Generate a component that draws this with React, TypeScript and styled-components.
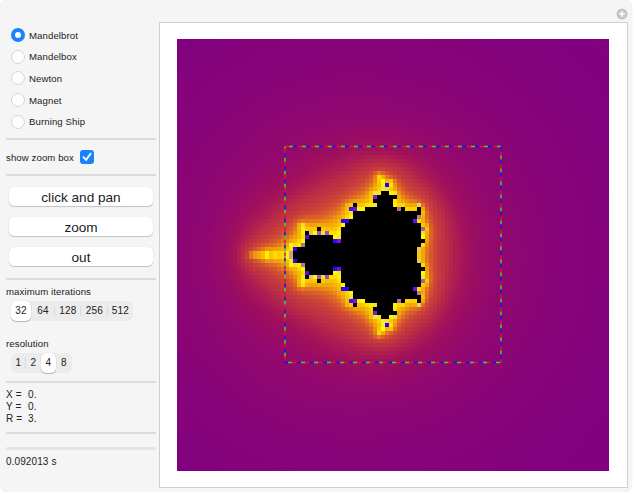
import React, { useEffect, useRef, useState } from 'react'
import styled, { createGlobalStyle } from 'styled-components'

const GlobalStyle = createGlobalStyle`
  html, body {
    margin: 0;
    padding: 0;
    background: #ffffff;
    font-family: "Liberation Sans", Arial, sans-serif;
  }
`

const Panel = styled.div`
  position: relative;
  box-sizing: border-box;
  width: 632px;
  height: 492px;
  display: flex;
  align-items: flex-start;
  padding: 22px 4px 0 6px;
  background: #f5f5f5;
  border-radius: 8px;
  box-shadow: 0 0 1px #d8d8d8;
`

const Sidebar = styled.div`
  width: 150px;
  margin-right: 3px;
  display: flex;
  flex-direction: column;
  color: #222222;
  font-size: 9.6px;
  letter-spacing: 0.1px;
`

const RadioList = styled.div`
  box-sizing: border-box;
  display: flex;
  flex-direction: column;
  padding: 6px 0 0 5px;
  height: 116px;
  gap: 7.7px;
`

const RadioRow = styled.div`
  display: flex;
  align-items: center;
  gap: 4px;
  height: 14px;
`

const Radio = styled.span<{ $on?: boolean }>`
  box-sizing: border-box;
  width: 14px;
  height: 14px;
  border-radius: 50%;
  background: ${p => (p.$on ? '#ffffff' : '#fdfdfd')};
  border: ${p => (p.$on ? '4px solid #1a82fb' : '1px solid #d6d6d6')};
`

const Rule = styled.div<{ $top?: number }>`
  height: 2px;
  margin-top: ${p => p.$top ?? 0}px;
  background: #dcdcdc;
`

const CheckRow = styled.div`
  height: 34px;
  display: flex;
  align-items: center;
  gap: 6px;
`

const CheckBox = styled.span`
  width: 14px;
  height: 14px;
  border-radius: 3px;
  background: #1a82fb;
  display: flex;
  align-items: center;
  justify-content: center;
`

const ButtonStack = styled.div`
  height: 102px;
  display: flex;
  flex-direction: column;
  gap: 11px;
  padding: 11px 3px 0;
  box-sizing: border-box;
`

const PushButton = styled.div`
  height: 19px;
  border-radius: 5px;
  background: #ffffff;
  box-shadow: 0 1px 1px rgba(0, 0, 0, 0.2), 0 0 1px rgba(0, 0, 0, 0.15);
  font-size: 13.6px;
  letter-spacing: 0;
  line-height: 21px;
  text-align: center;
  color: #1c1c1c;
`

const ControlLabel = styled.div<{ $top: number }>`
  margin-top: ${p => p.$top}px;
  line-height: 12px;
  height: 12px;
`

const Segments = styled.div`
  align-self: flex-start;
  margin: 3px 0 0 5px;
  height: 20px;
  display: flex;
  align-items: center;
  background: #ececec;
  border-radius: 6px;
`

const Segment = styled.span<{ $on?: boolean; $sep?: boolean; $w: number }>`
  position: relative;
  width: ${p => p.$w}px;
  height: 20px;
  line-height: 20px;
  text-align: center;
  color: #222222;
  border-radius: 5px;
  letter-spacing: 0.2px;
  font-size: 10px;
  background: ${p => (p.$on ? '#ffffff' : 'transparent')};
  box-shadow: ${p => (p.$on ? '0 1px 1px rgba(0,0,0,0.25), 0 0 1px rgba(0,0,0,0.2)' : 'none')};

  &::after {
    content: '';
    display: ${p => (p.$sep ? 'block' : 'none')};
    position: absolute;
    right: 0;
    top: 5px;
    height: 10px;
    width: 1px;
    background: #dadada;
  }
`

const Readout = styled.div`
  height: 49px;
  padding-top: 6px;
  box-sizing: border-box;
  line-height: 12px;
  font-size: 10px;
`

const ReadLine = styled.div`
  display: flex;
`

const ReadName = styled.span`
  width: 22px;
`

const ProgressTrack = styled.div`
  height: 3px;
  margin-top: 13px;
  background: #e4e4e4;
  border-radius: 2px;
`

const Timing = styled.div`
  margin-top: 6px;
  line-height: 12px;
  font-size: 10px;
`

const Frame = styled.div`
  box-sizing: border-box;
  width: 469px;
  height: 466px;
  background: #ffffff;
  border: 1.5px solid #cfcfcf;
  padding: 16px 16px 0 16.5px;
`

const Plot = styled.div`
  position: relative;
  width: 432px;
  height: 432px;
`

const PlotCanvas = styled.canvas`
  display: block;
`

const ZoomBox = styled.svg`
  position: absolute;
  left: 106px;
  top: 106px;
`

const Pod = styled.svg`
  position: absolute;
  top: 8px;
  right: 4px;
`

const BLACK_FROM = 18.5

const stops: [number, number, number, number][] = [
  [0.9, 128, 0, 128],
  [2.1, 146, 8, 110],
  [2.7, 160, 16, 92],
  [3.5, 187, 44, 69],
  [4.5, 205, 70, 55],
  [5.5, 225, 110, 35],
  [6.5, 240, 160, 12],
  [8, 248, 190, 0],
  [10, 255, 225, 0],
  [12, 255, 255, 0],
  [15, 228, 210, 100],
  [16.2, 175, 105, 160],
  [17, 130, 30, 215],
  [17.8, 45, 0, 255],
  [32, 20, 0, 240],
]

function shade(mu: number): string {
  let i = 0
  while (i < stops.length - 2 && mu > stops[i + 1][0]) i++
  const a = stops[i]
  const b = stops[i + 1]
  const t = Math.max(0, Math.min(1, (mu - a[0]) / (b[0] - a[0])))
  const mix = (k: number) => Math.round(a[k] + (b[k] - a[k]) * t)
  return `rgb(${mix(1)},${mix(2)},${mix(3)})`
}

function escapeTime(cx: number, cy: number, maxIter: number): number {
  let x = 0
  let y = 0
  for (let n = 0; n < maxIter; n++) {
    const xx = x * x
    const yy = y * y
    if (xx + yy > 16) {
      return Math.max(0, n + 1 - Math.log2(Math.log2(xx + yy) / 2))
    }
    y = 2 * x * y + cy
    x = xx - yy + cx
  }
  return -1
}

const CELLS = 108
const CELL = 4

const Fractal = () => {
  const ref = useRef<HTMLCanvasElement>(null)
  useEffect(() => {
    const ctx = ref.current?.getContext('2d')
    if (!ctx) return
    for (let j = 0; j < CELLS; j++) {
      for (let i = 0; i < CELLS; i++) {
        const cx = -3 + ((i + 0.5) * 6) / CELLS
        const cy = -3 + ((j + 0.5) * 6) / CELLS
        const mu = escapeTime(cx, cy, 32)
        ctx.fillStyle = mu < 0 || mu >= BLACK_FROM ? '#000000' : shade(mu)
        ctx.fillRect(i * CELL, j * CELL, CELL, CELL)
      }
    }
  }, [])
  return <PlotCanvas ref={ref} width={432} height={432} />
}

const dashes = [
  { color: '#e01030', offset: 0 },
  { color: '#48d030', offset: -4 },
  { color: '#2010e8', offset: -8 },
]

const ZoomOutline = () => (
  <ZoomBox width="220" height="220" viewBox="0 0 220 220">
    {dashes.map(d => (
      <rect
        key={d.color}
        x="2"
        y="1.5"
        width="216"
        height="216"
        fill="none"
        stroke={d.color}
        strokeWidth="1.5"
        strokeDasharray="4 9"
        strokeDashoffset={d.offset}
      />
    ))}
  </ZoomBox>
)

const fractals = ['Mandelbrot', 'Mandelbox', 'Newton', 'Magnet', 'Burning Ship']
const iterations = [
  { label: '32', w: 20 },
  { label: '64', w: 24 },
  { label: '128', w: 26 },
  { label: '256', w: 27 },
  { label: '512', w: 25 },
]
const resolutions = [
  { label: '1', w: 15 },
  { label: '2', w: 15 },
  { label: '4', w: 15 },
  { label: '8', w: 16 },
]

export default function App() {
  const [kind] = useState('Mandelbrot')
  return (
    <>
      <GlobalStyle />
      <Panel>
        <Sidebar>
          <RadioList>
            {fractals.map(f => (
              <RadioRow key={f}>
                <Radio $on={f === kind} />
                {f}
              </RadioRow>
            ))}
          </RadioList>
          <Rule />
          <CheckRow>
            show zoom box
            <CheckBox>
              <svg width="10" height="10" viewBox="0 0 10 10">
                <path d="M1.5 5.2 L4 8 L8.6 1.6" fill="none" stroke="#ffffff" strokeWidth="1.8" strokeLinecap="round" strokeLinejoin="round" />
              </svg>
            </CheckBox>
          </CheckRow>
          <Rule />
          <ButtonStack>
            <PushButton>click and pan</PushButton>
            <PushButton>zoom</PushButton>
            <PushButton>out</PushButton>
          </ButtonStack>
          <Rule />
          <ControlLabel $top={6}>maximum iterations</ControlLabel>
          <Segments>
            {iterations.map((s, i) => (
              <Segment key={s.label} $w={s.w} $on={i === 0} $sep={i > 0 && i < iterations.length - 1}>
                {s.label}
              </Segment>
            ))}
          </Segments>
          <ControlLabel $top={17}>resolution</ControlLabel>
          <Segments>
            {resolutions.map((s, i) => (
              <Segment key={s.label} $w={s.w} $on={i === 2} $sep={i === 0}>
                {s.label}
              </Segment>
            ))}
          </Segments>
          <Rule $top={8} />
          <Readout>
            <ReadLine><ReadName>X =</ReadName>0.</ReadLine>
            <ReadLine><ReadName>Y =</ReadName>0.</ReadLine>
            <ReadLine><ReadName>R =</ReadName>3.</ReadLine>
          </Readout>
          <Rule />
          <ProgressTrack />
          <Timing>0.092013 s</Timing>
        </Sidebar>
        <Frame>
          <Plot>
            <Fractal />
            <ZoomOutline />
          </Plot>
        </Frame>
        <Pod width="12" height="12" viewBox="0 0 12 12">
          <circle cx="6" cy="6" r="5.5" fill="#c4c4c4" />
          <path d="M6 3 V9 M3 6 H9" stroke="#ffffff" strokeWidth="1.6" />
        </Pod>
      </Panel>
    </>
  )
}
